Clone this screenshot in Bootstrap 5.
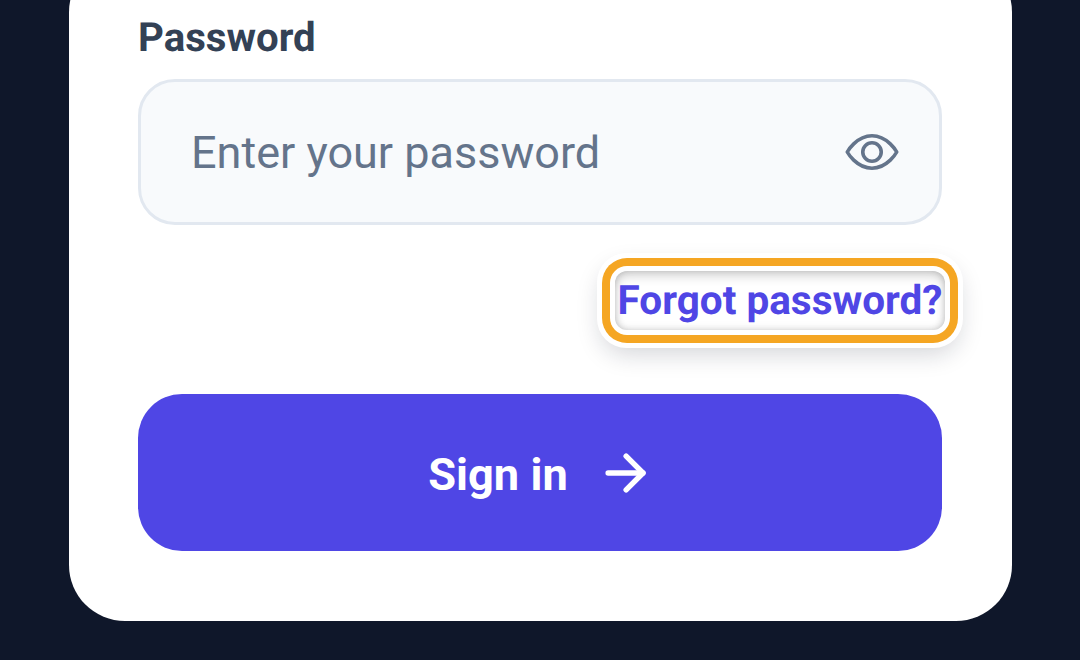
<!DOCTYPE html>
<html lang="en">
<head>
<meta charset="utf-8">
<title>Sign in</title>
<link href="https://cdn.jsdelivr.net/npm/bootstrap@5.3.0/dist/css/bootstrap.min.css" rel="stylesheet">
<style>
html, body { height: 660px; overflow: hidden; }
body { background: #0f172a; font-family: Roboto, "Liberation Sans", sans-serif; text-rendering: geometricPrecision; }
.stage { height: 660px; padding: 0 68px 39px 69px; }
.sheet { background: #fff; border-radius: 56px; padding: 60px 70px 70px 69px; flex-shrink: 0; }
.pw-label { font-size: 40.2px; line-height: 44px; font-weight: 700; color: #334155; margin-bottom: 19px; }
.pw-wrap { height: 146px; background: #f8fafc; border: 3px solid #e2e8f0; border-radius: 37px; padding: 0 40px 0 50px; }
.pw-input { background: transparent; border: 0; outline: 0; padding: 2px 0 0; font-size: 45px; color: #64748b; font-family: inherit; flex: 1 1 auto; min-width: 0; }
.pw-input::placeholder { color: #64748b; opacity: 1; }
.eye-icon { width: 54px; height: 54px; }
.forgot-row { margin-top: 46px; margin-bottom: 64px; }
.forgot-link { display: block; width: 330px; height: 59px; line-height: 59px; text-align: center; margin-right: -3px; font-size: 40.5px; font-weight: 700; color: #4f46e5; text-decoration: none; border-radius: 12px; background: #fff; white-space: nowrap; box-shadow: inset 0 6px 12px -2px rgba(0,0,0,.2), inset 0 -3px 9px -2px rgba(0,0,0,.1), inset 3px 0 8px -3px rgba(0,0,0,.1), inset -3px 0 8px -3px rgba(0,0,0,.1), 0 0 0 5px #fff, 0 0 0 13px #f5a623, 0 0 0 18px #fff, 0 10px 24px 14px rgba(15,23,42,.18); }
.signin-btn { height: 157px; width: 100%; background: #4f46e5; border: 0; border-radius: 44px; color: #fff; font-size: 45.2px; font-weight: 700; gap: 31px; }
.signin-btn:hover, .signin-btn:active { background: #4f46e5 !important; color: #fff !important; }
.signin-text { padding-top: 4px; }
.arrow-icon { width: 54px; height: 54px; margin-left: -1px; }
</style>
</head>
<body>
<div class="stage d-flex flex-column justify-content-end">
  <div class="sheet">
    <label class="pw-label d-block" for="pw">Password</label>
    <div class="pw-wrap d-flex align-items-center">
      <input id="pw" class="pw-input" type="password" placeholder="Enter your password">
      <svg class="eye-icon flex-shrink-0" viewBox="0 0 24 24" fill="none" stroke="#64748b" stroke-width="1.6" stroke-linecap="round" stroke-linejoin="round">
        <path d="M1 12S5 4.8 12 4.8 23 12 23 12 19 19.2 12 19.2 1 12 1 12Z"/>
        <circle cx="12" cy="12" r="4.1"/>
      </svg>
    </div>
    <div class="forgot-row d-flex justify-content-end">
      <a class="forgot-link" href="#">Forgot password?</a>
    </div>
    <button class="btn signin-btn d-flex align-items-center justify-content-center" type="button">
      <span class="signin-text">Sign in</span>
      <svg class="arrow-icon" viewBox="0 0 24 24" fill="none" stroke="#fff" stroke-width="2.4" stroke-linecap="round" stroke-linejoin="round">
        <path d="M4.5 12H20"/><path d="M12.5 4.5L20 12l-7.5 7.5"/>
      </svg>
    </button>
  </div>
</div>
<script src="https://cdn.jsdelivr.net/npm/bootstrap@5.3.0/dist/js/bootstrap.bundle.min.js"></script>
</body>
</html>
